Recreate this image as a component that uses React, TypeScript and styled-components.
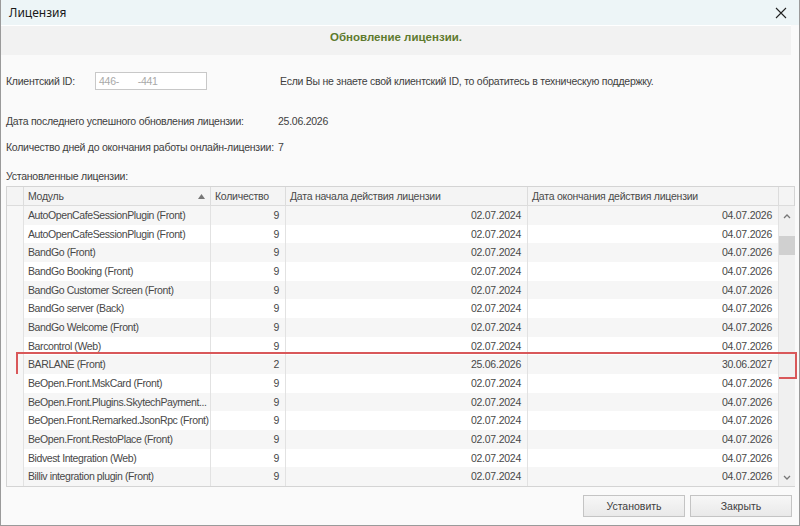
import React from 'react';
import styled, { createGlobalStyle } from 'styled-components';

interface LicenseRow {
  module: string;
  count: number;
  start: string;
  end: string;
  marked?: boolean;
}

const rows: LicenseRow[] = [
  { module: 'AutoOpenCafeSessionPlugin (Front)', count: 9, start: '02.07.2024', end: '04.07.2026' },
  { module: 'AutoOpenCafeSessionPlugin (Front)', count: 9, start: '02.07.2024', end: '04.07.2026' },
  { module: 'BandGo (Front)', count: 9, start: '02.07.2024', end: '04.07.2026' },
  { module: 'BandGo Booking (Front)', count: 9, start: '02.07.2024', end: '04.07.2026' },
  { module: 'BandGo Customer Screen (Front)', count: 9, start: '02.07.2024', end: '04.07.2026' },
  { module: 'BandGo server (Back)', count: 9, start: '02.07.2024', end: '04.07.2026' },
  { module: 'BandGo Welcome  (Front)', count: 9, start: '02.07.2024', end: '04.07.2026' },
  { module: 'Barcontrol (Web)', count: 9, start: '02.07.2024', end: '04.07.2026' },
  { module: 'BARLANE (Front)', count: 2, start: '25.06.2026', end: '30.06.2027', marked: true },
  { module: 'BeOpen.Front.MskCard (Front)', count: 9, start: '02.07.2024', end: '04.07.2026' },
  { module: 'BeOpen.Front.Plugins.SkytechPayment...', count: 9, start: '02.07.2024', end: '04.07.2026' },
  { module: 'BeOpen.Front.Remarked.JsonRpc (Front)', count: 9, start: '02.07.2024', end: '04.07.2026' },
  { module: 'BeOpen.Front.RestoPlace (Front)', count: 9, start: '02.07.2024', end: '04.07.2026' },
  { module: 'Bidvest Integration (Web)', count: 9, start: '02.07.2024', end: '04.07.2026' },
  { module: 'Billiv integration plugin (Front)', count: 9, start: '02.07.2024', end: '04.07.2026' },
];

const COLS = '17px 187px 75px 242px 251px 16px';

const GlobalStyle = createGlobalStyle`
  html, body {
    margin: 0;
    padding: 0;
    background: #ffffff;
  }
`;

const Window = styled.div`
  width: 800px;
  height: 526px;
  box-sizing: border-box;
  display: flex;
  flex-direction: column;
  background: #fafafa;
  border: 1px solid #9a9a9a;
  border-top: none;
  color: #404040;
  font-size: 10.5px;
  letter-spacing: -0.25px;
  font-family: "Liberation Sans", Arial, sans-serif;
`;

const TitleBar = styled.div`
  height: 25px;
  display: flex;
  align-items: center;
  justify-content: space-between;
  padding: 0 8px 0 8px;
  background: #edf5f7;
  font-family: "Noto Sans", sans-serif;
  font-size: 12px;
  letter-spacing: 0;
  color: #1a1a1a;
`;

const CloseIcon = styled.svg`
  width: 12px;
  height: 12px;
  margin-right: 4px;
`;

const HeaderBand = styled.div`
  height: 30px;
  box-sizing: border-box;
  margin-right: 8px;
  display: flex;
  justify-content: center;
  padding-top: 5px;
  background: #f2f2f2;
  border-top: 1px solid #ffffff;
  font-weight: bold;
  font-size: 11.5px;
  letter-spacing: 0;
  color: #5e7a2e;
`;

const Content = styled.div`
  flex: 1;
  display: flex;
  flex-direction: column;
  padding: 0 5px 0 5px;
`;

const InfoRow = styled.div<{ $top: number }>`
  display: flex;
  align-items: center;
  height: 18px;
  margin-top: ${p => p.$top}px;
`;

const Label = styled.span<{ $w: number }>`
  width: ${p => p.$w}px;
  flex-shrink: 0;
  white-space: nowrap;
`;

const IdBox = styled.div`
  width: 107px;
  height: 16px;
  box-sizing: content-box;
  border: 1px solid #c8c8c8;
  background: #ffffff;
  color: #a8a8a8;
  padding-left: 3px;
  display: flex;
  align-items: center;
  margin-right: 73px;
  white-space: pre;
`;

const Caption = styled.div`
  margin-top: 13px;
  height: 14px;
  display: flex;
  align-items: center;
`;

const Table = styled.div`
  margin-top: 3px;
  width: 789px;
  border: 1px solid #d4d4d4;
  box-sizing: border-box;
  background: #ffffff;
`;

const HeaderRow = styled.div`
  display: grid;
  grid-template-columns: ${COLS};
  height: 18px;
  background: #f4f4f4;
  border-bottom: 1px solid #dcdcdc;
`;

const HeadCell = styled.div<{ $last?: boolean }>`
  display: flex;
  align-items: center;
  justify-content: space-between;
  padding: 0 5px 0 4px;
  border-right: ${p => (p.$last ? 'none' : '1px solid #dcdcdc')};
  white-space: nowrap;
  overflow: hidden;
  color: #4a4a4a;
`;

const SortArrow = styled.svg`
  width: 7px;
  height: 5px;
`;

const Body = styled.div`
  display: flex;
`;

const RowList = styled.div`
  flex: 1;
  display: flex;
  flex-direction: column;
`;

const Row = styled.div<{ $alt: boolean; $marked?: boolean }>`
  position: relative;
  display: grid;
  grid-template-columns: 17px 187px 75px 242px 251px;
  height: 18.67px;
  background: ${p => (p.$alt ? '#ffffff' : '#f6f6f6')};

  ${p =>
    p.$marked &&
    `
    &::after {
      content: '';
      position: absolute;
      left: 9px;
      right: -18px;
      top: -3px;
      bottom: -5px;
      border: 2px solid #d9585a;
      pointer-events: none;
    }
  `}
`;

const Cell = styled.div<{ $right?: boolean; $indicator?: boolean }>`
  display: block;
  line-height: 18.67px;
  text-align: ${p => (p.$right ? 'right' : 'left')};
  padding: 0 6px 0 4px;
  border-right: 1px solid #e2e2e2;
  white-space: nowrap;
  overflow: hidden;
  letter-spacing: ${p => (p.$right ? '-0.25px' : '-0.4px')};
  background: ${p => (p.$indicator ? '#f7f7f7' : 'transparent')};
  color: #484848;
`;

const ScrollBar = styled.div`
  width: 16px;
  display: flex;
  flex-direction: column;
  align-items: center;
  background: #f0f0f0;
  padding: 7px 0 5px;
  box-sizing: border-box;
`;

const ScrollArrow = styled.svg`
  width: 8px;
  height: 6px;
`;

const Thumb = styled.div`
  width: 16px;
  height: 19px;
  margin-top: 17px;
  background: #d0d0d0;
`;

const Spacer = styled.div`
  flex: 1;
`;

const ButtonBar = styled.div`
  display: flex;
  justify-content: flex-end;
  gap: 5px;
  margin-top: 8px;
  padding-right: 2px;
`;

const Button = styled.button`
  width: 102px;
  height: 22px;
  border: 1px solid #c4c4c4;
  background: linear-gradient(#f7f7f7, #e9e9e9);
  font-family: "Liberation Sans", Arial, sans-serif;
  font-size: 10.5px;
  color: #404040;
  padding: 0;
`;

const App: React.FC = () => {
  return (
    <>
      <GlobalStyle />
      <Window>
        <TitleBar>
          <span>Лицензия</span>
          <CloseIcon viewBox="0 0 12 12">
            <path d="M1 1 L11 11 M11 1 L1 11" stroke="#222" strokeWidth="1.1" />
          </CloseIcon>
        </TitleBar>
        <HeaderBand>Обновление лицензии.</HeaderBand>
        <Content>
          <InfoRow $top={17}>
            <Label $w={89}>Клиентский ID:</Label>
            <IdBox>{'446-       -441'}</IdBox>
            <span>Если Вы не знаете свой клиентский ID, то обратитесь в техническую поддержку.</span>
          </InfoRow>
          <InfoRow $top={22}>
            <Label $w={272}>Дата последнего успешного обновления лицензии:</Label>
            <span>25.06.2026</span>
          </InfoRow>
          <InfoRow $top={8}>
            <Label $w={272}>Количество дней до окончания работы онлайн-лицензии:</Label>
            <span>7</span>
          </InfoRow>
          <Caption>Установленные лицензии:</Caption>
          <Table>
            <HeaderRow>
              <HeadCell />
              <HeadCell>
                <span>Модуль</span>
                <SortArrow viewBox="0 0 7 5">
                  <path d="M0 5 L3.5 0 L7 5 Z" fill="#777" />
                </SortArrow>
              </HeadCell>
              <HeadCell>Количество</HeadCell>
              <HeadCell>Дата начала действия лицензии</HeadCell>
              <HeadCell>Дата окончания действия лицензии</HeadCell>
              <HeadCell $last />
            </HeaderRow>
            <Body>
              <RowList>
                {rows.map((r, i) => (
                  <Row key={i} $alt={i % 2 === 1} $marked={r.marked}>
                    <Cell $indicator />
                    <Cell>{r.module}</Cell>
                    <Cell $right>{r.count}</Cell>
                    <Cell $right>{r.start}</Cell>
                    <Cell $right>{r.end}</Cell>
                  </Row>
                ))}
              </RowList>
              <ScrollBar>
                <ScrollArrow viewBox="0 0 8 6">
                  <path d="M1 5 L4 2 L7 5" stroke="#777" strokeWidth="1.3" fill="none" />
                </ScrollArrow>
                <Thumb />
                <Spacer />
                <ScrollArrow viewBox="0 0 8 6">
                  <path d="M1 1 L4 4 L7 1" stroke="#777" strokeWidth="1.3" fill="none" />
                </ScrollArrow>
              </ScrollBar>
            </Body>
          </Table>
          <ButtonBar>
            <Button>Установить</Button>
            <Button>Закрыть</Button>
          </ButtonBar>
        </Content>
      </Window>
    </>
  );
};

export default App;
